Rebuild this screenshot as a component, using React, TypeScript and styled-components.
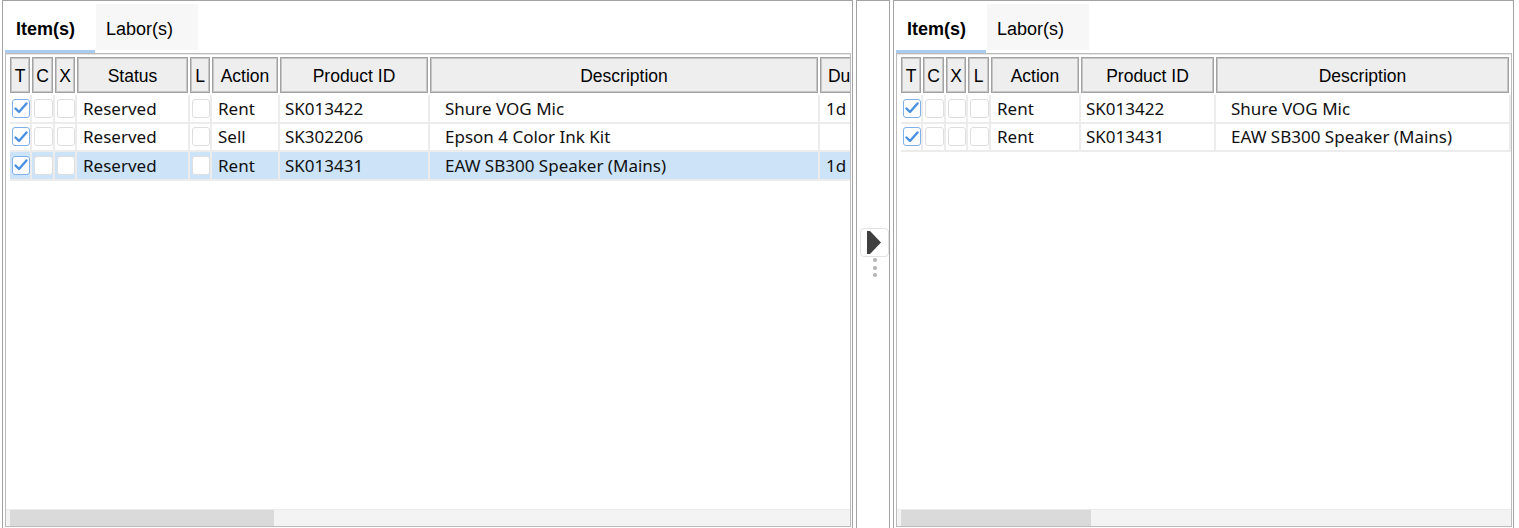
import React, { FC } from "react";
import styled, { createGlobalStyle } from "styled-components";

const GlobalStyle = createGlobalStyle`
  html, body {
    margin: 0;
    padding: 0;
    background: #ffffff;
  }
  #root {
    height: 528px;
    overflow: hidden;
  }
`;

type Col = {
  title: string;
  width: number;
  check?: boolean;
  pad?: number;
};

type Row = {
  cells: (string | boolean)[];
  selected?: boolean;
};

const leftCols: Col[] = [
  { title: "T", width: 22, check: true },
  { title: "C", width: 23, check: true },
  { title: "X", width: 22, check: true },
  { title: "Status", width: 113 },
  { title: "L", width: 22, check: true },
  { title: "Action", width: 68 },
  { title: "Product ID", width: 150, pad: 5 },
  { title: "Description", width: 390, pad: 15 },
  { title: "Duration", width: 84 },
];

const leftRows: Row[] = [
  { cells: [true, false, false, "Reserved", false, "Rent", "SK013422", "Shure VOG Mic", "1d"] },
  { cells: [true, false, false, "Reserved", false, "Sell", "SK302206", "Epson 4 Color Ink Kit", ""] },
  {
    cells: [true, false, false, "Reserved", false, "Rent", "SK013431", "EAW SB300 Speaker (Mains)", "1d"],
    selected: true,
  },
];

const rightCols: Col[] = [
  { title: "T", width: 22, check: true },
  { title: "C", width: 23, check: true },
  { title: "X", width: 22, check: true },
  { title: "L", width: 23, check: true },
  { title: "Action", width: 90 },
  { title: "Product ID", width: 135, pad: 5 },
  { title: "Description", width: 295, pad: 15 },
];

const rightRows: Row[] = [
  { cells: [true, false, false, false, "Rent", "SK013422", "Shure VOG Mic"] },
  { cells: [true, false, false, false, "Rent", "SK013431", "EAW SB300 Speaker (Mains)"] },
];

const Workspace = styled.div`
  display: flex;
  height: 528px;
  padding-left: 2px;
  box-sizing: border-box;
`;

const Pane = styled.div<{ $width: number }>`
  width: ${(p) => p.$width}px;
  flex-shrink: 0;
  box-sizing: border-box;
  border: 1px solid #a3a3a3;
  border-bottom: none;
  padding: 0 1px 1px 2px;
  display: flex;
  flex-direction: column;
`;

const TabStrip = styled.div`
  height: 52px;
  display: flex;
  align-items: flex-end;
  gap: 1px;
`;

const Tab = styled.div<{ $active?: boolean; $width: number }>`
  width: ${(p) => p.$width}px;
  box-sizing: border-box;
  height: ${(p) => (p.$active ? 49 : 46)}px;
  margin-bottom: ${(p) => (p.$active ? 0 : 3)}px;
  padding-left: ${(p) => (p.$active ? 11 : 10)}px;
  padding-top: 4px;
  display: flex;
  align-items: center;
  font-family: "Liberation Sans", Arial, sans-serif;
  font-size: 18px;
  font-weight: ${(p) => (p.$active ? 700 : 400)};
  color: #000;
  background: ${(p) => (p.$active ? "#ffffff" : "#f7f7f7")};
  border-bottom: ${(p) => (p.$active ? "3px solid #a9cbef" : "none")};
`;

const TableBox = styled.div`
  flex: 1;
  min-height: 0;
  border: 1px solid #bcbcbc;
  box-shadow: inset 0 1px 0 #e6e6e6;
  padding: 3px 0 0 4px;
  display: flex;
  flex-direction: column;
  overflow: hidden;
`;

const GridRow = styled.div<{ $tracks: string }>`
  display: grid;
  grid-template-columns: ${(p) => p.$tracks};
`;

const HeaderRow = styled(GridRow)`
  height: 36px;
  margin-bottom: 2px;
`;

const HeaderCell = styled.div`
  box-sizing: border-box;
  margin-right: 2px;
  height: 36px;
  padding-top: 2px;
  border: 1px solid #a2a2a2;
  box-shadow: inset 0 0 0 1px #c6c6c6;
  background: #eeeeee;
  display: flex;
  align-items: center;
  justify-content: center;
  font-family: "Liberation Sans", Arial, sans-serif;
  font-size: 17.5px;
  color: #000;
  white-space: nowrap;
  overflow: hidden;
`;

const DataRow = styled(GridRow)<{ $selected?: boolean }>`
  height: 28.5px;
  background: ${(p) => (p.$selected ? "#cce3f8" : "#ffffff")};
`;

const DataCell = styled.div<{ $pad: number }>`
  box-sizing: border-box;
  border-right: 2px solid #ececec;
  border-bottom: 2px solid #ececec;
  padding-left: ${(p) => p.$pad}px;
  display: flex;
  align-items: center;
  font-family: "Noto Sans", "Open Sans", sans-serif;
  font-size: 17px;
  color: #111;
  white-space: nowrap;
  overflow: hidden;
`;

const Box = styled.div<{ $checked?: boolean }>`
  width: 19px;
  height: 19px;
  box-sizing: border-box;
  border-radius: 3px;
  border: 1.5px solid ${(p) => (p.$checked ? "#7fb0ea" : "#dedede")};
  background: #ffffff;
  display: flex;
  align-items: center;
  justify-content: center;
`;

const Filler = styled.div`
  flex: 1;
`;

const ScrollTrack = styled.div`
  height: 16px;
  margin-left: -4px;
  padding-left: 4px;
  background: #f3f3f3;
  border-top: 1px solid #ebebeb;
  display: flex;
`;

const ScrollThumb = styled.div<{ $width: number }>`
  width: ${(p) => p.$width}px;
  height: 100%;
  background: #dadada;
`;

const Splitter = styled.div`
  width: 34px;
  margin: 0 3px 0 3px;
  flex-shrink: 0;
  box-sizing: border-box;
  border: 1px solid #a3a3a3;
  border-bottom: none;
  display: flex;
  flex-direction: column;
  align-items: flex-end;
  padding-top: 227px;
`;

const ArrowButton = styled.div`
  width: 29px;
  height: 29px;
  box-sizing: border-box;
  border: 1px solid #e2e2e2;
  border-radius: 4px;
  background: #ffffff;
`;

const Dots = styled.div`
  width: 29px;
  display: flex;
  flex-direction: column;
  align-items: center;
  gap: 3.5px;
  margin-top: 1px;
  padding-left: 1px;
  box-sizing: border-box;
`;

const Dot = styled.span`
  width: 4px;
  height: 4px;
  border-radius: 50%;
  background: #b3b3b3;
`;

const Check: FC<{ checked: boolean }> = ({ checked }) => (
  <Box $checked={checked}>
    {checked && (
      <svg width="14" height="12" viewBox="0 0 14 12">
        <polyline
          points="1.5,6.5 5,10 12.5,1.5"
          fill="none"
          stroke="#4a90e2"
          strokeWidth="2.4"
          strokeLinecap="round"
          strokeLinejoin="round"
        />
      </svg>
    )}
  </Box>
);

const Grid: FC<{ cols: Col[]; rows: Row[]; thumb: number }> = ({ cols, rows, thumb }) => {
  const tracks = cols.map((c) => `${c.width}px`).join(" ");
  return (
    <TableBox>
      <HeaderRow $tracks={tracks}>
        {cols.map((c) => (
          <HeaderCell key={c.title}>{c.title}</HeaderCell>
        ))}
      </HeaderRow>
      {rows.map((r, i) => (
        <DataRow key={i} $tracks={tracks} $selected={r.selected}>
          {cols.map((c, j) => {
            const v = r.cells[j];
            return (
              <DataCell key={c.title} $pad={c.check ? 2 : c.pad ?? 6}>
                {c.check ? <Check checked={v === true} /> : v}
              </DataCell>
            );
          })}
        </DataRow>
      ))}
      <Filler />
      <ScrollTrack>
        <ScrollThumb $width={thumb} />
      </ScrollTrack>
    </TableBox>
  );
};

const Tabs: FC = () => (
  <TabStrip>
    <Tab $active $width={90}>
      Item(s)
    </Tab>
    <Tab $width={102}>Labor(s)</Tab>
  </TabStrip>
);

const App: FC = () => (
  <>
    <GlobalStyle />
    <Workspace>
      <Pane $width={851}>
        <Tabs />
        <Grid cols={leftCols} rows={leftRows} thumb={264} />
      </Pane>
      <Splitter>
        <ArrowButton>
          <svg width="27" height="27" viewBox="0 0 27 27">
            <polygon points="6,2 9,2 20,13.5 9,25 6,25" fill="#3f3f3f" />
          </svg>
        </ArrowButton>
        <Dots>
          <Dot />
          <Dot />
          <Dot />
        </Dots>
      </Splitter>
      <Pane $width={621}>
        <Tabs />
        <Grid cols={rightCols} rows={rightRows} thumb={190} />
      </Pane>
    </Workspace>
  </>
);

export default App;
